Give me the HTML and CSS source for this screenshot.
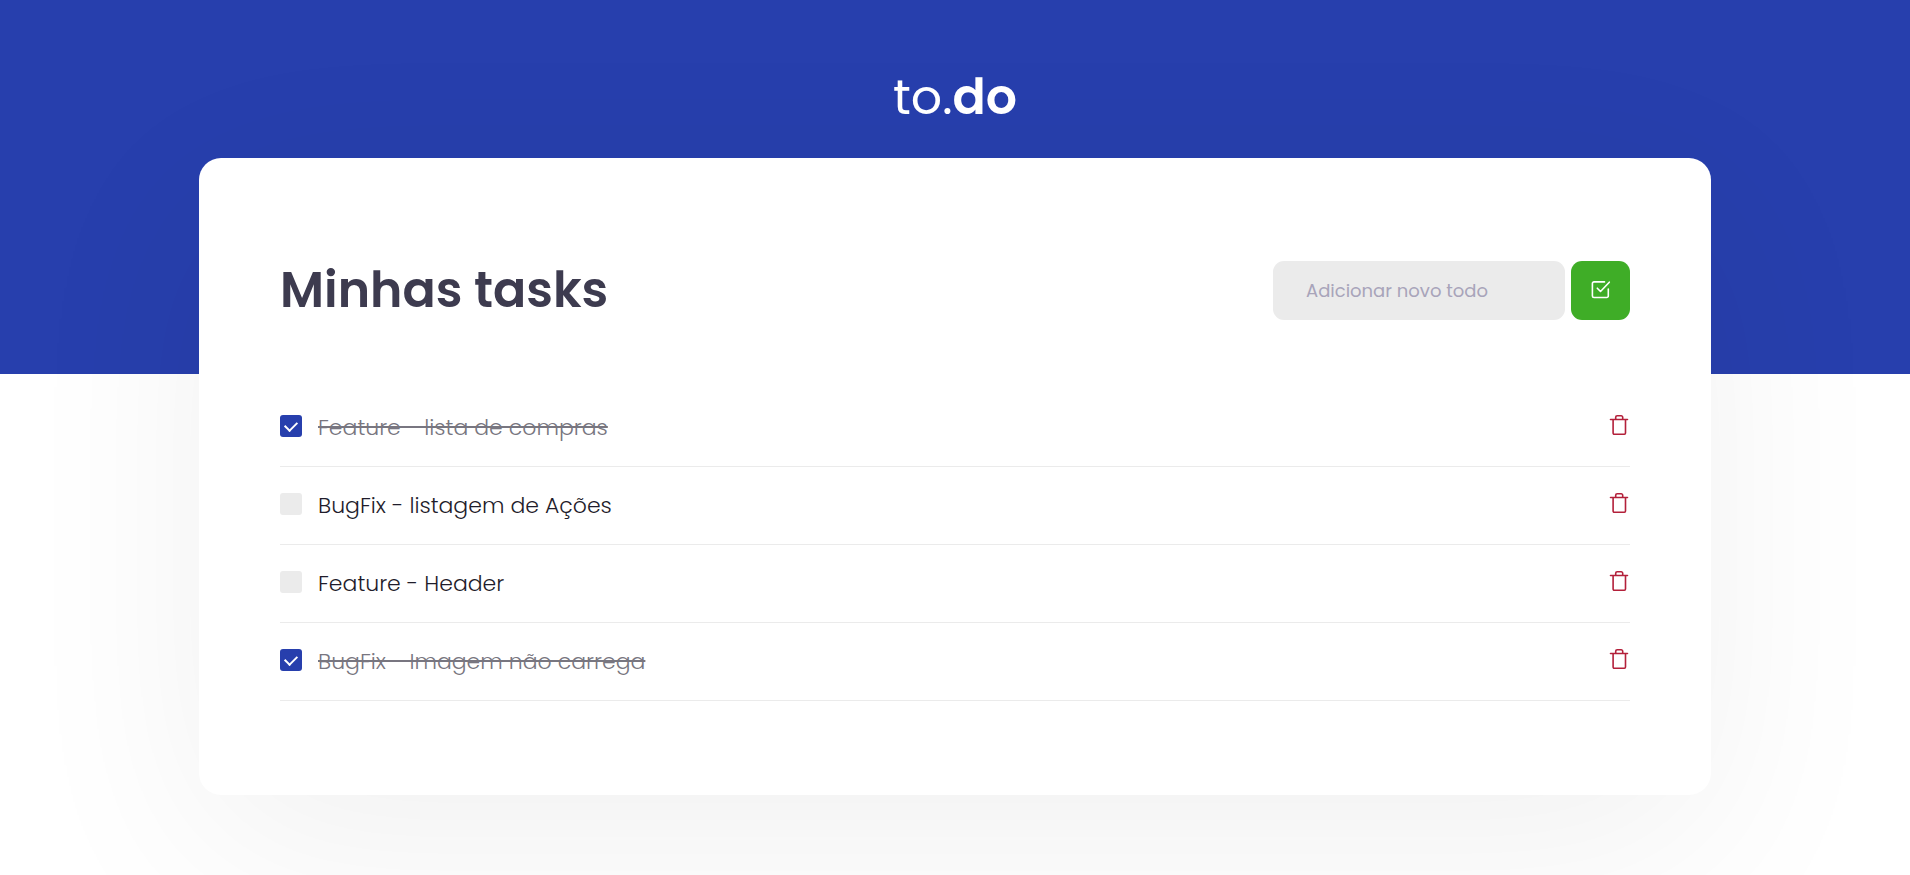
FILE: index.html
```
<!DOCTYPE html>
<html lang="pt-BR">
<head>
<meta charset="utf-8">
<meta name="viewport" content="width=device-width, initial-scale=1">
<title>to.do</title>
<link rel="stylesheet" href="styles.css">
</head>
<body>
<svg class="sprite" aria-hidden="true">
  <symbol id="trash" viewBox="0 0 22 22">
    <path d="M2.500 5.500h17M17.500 5.500v13.600a1.100 1.100 0 0 1-1.100 1.100H6.200A1.100 1.100 0 0 1 5.100 19.100V5.500M7.700 5.300V3.300a1.500 1.500 0 0 1 1.500-1.500h4a1.500 1.500 0 0 1 1.500 1.500v2"/>
  </symbol>
  <symbol id="check-square" viewBox="0 0 22 22">
    <path d="M7.300 9.200l3.200 3.300L19.300 3.200M18.300 10v6.900a1.600 1.600 0 0 1-1.600 1.600H4A1.600 1.600 0 0 1 2.400 16.900V4.500A1.600 1.600 0 0 1 4 2.900h10.500"/>
  </symbol>
</svg>
<header class="header">
  <div class="logo">to.<strong>do</strong></div>
</header>
<main class="card">
  <div class="card-head">
    <h1>Minhas tasks</h1>
    <form class="new-task">
      <input class="new-input" type="text" placeholder="Adicionar novo todo" aria-label="Adicionar novo todo">
      <button class="add" type="button" aria-label="Adicionar"><svg class="icon"><use href="#check-square"/></svg></button>
    </form>
  </div>
  <ul class="tasks">
    <li class="task">
      <label class="task-label"><input class="check" type="checkbox" checked><span class="text">Feature - lista de compras</span></label>
      <button class="remove" type="button" aria-label="Remover"><svg class="icon"><use href="#trash"/></svg></button>
    </li>
    <li class="task">
      <label class="task-label"><input class="check" type="checkbox"><span class="text">BugFix - listagem de Ações</span></label>
      <button class="remove" type="button" aria-label="Remover"><svg class="icon"><use href="#trash"/></svg></button>
    </li>
    <li class="task">
      <label class="task-label"><input class="check" type="checkbox"><span class="text">Feature - Header</span></label>
      <button class="remove" type="button" aria-label="Remover"><svg class="icon"><use href="#trash"/></svg></button>
    </li>
    <li class="task">
      <label class="task-label"><input class="check" type="checkbox" checked><span class="text">BugFix - Imagem não carrega</span></label>
      <button class="remove" type="button" aria-label="Remover"><svg class="icon"><use href="#trash"/></svg></button>
    </li>
  </ul>
</main>
</body>
</html>
```
FILE: styles.css
```
* { box-sizing: border-box; margin: 0; padding: 0; }
body {
  min-height: 100vh;
  background: #fff;
  color: #1f1d2b;
  font-family: Poppins, Inter, "Open Sans", sans-serif;
}
.sprite { display: none; }
.header {
  height: 374px;
  padding-top: 65px;
  background: #273fad;
  text-align: center;
}
.logo { color: #fff; font-size: 49px; line-height: 64px; font-weight: 400; }
.logo strong { font-weight: 600; }
.card {
  width: calc(100% - 64px);
  max-width: 1512px;
  margin: -216px auto 0;
  padding: 101px 81px 94px;
  border-radius: 22px;
  background: #fff;
  box-shadow: 0 50px 200px rgba(0, 0, 0, 0.06);
}
.card-head { display: flex; justify-content: space-between; align-items: center; gap: 24px; }
h1 { color: #3d3b4f; font-size: 49px; line-height: 62px; font-weight: 600; }
.new-task { display: flex; gap: 6px; }
.new-input {
  width: 292px;
  height: 59px;
  padding: 0 33px;
  border: 0;
  border-radius: 11px;
  background: #ebebeb;
  color: #3d3b4f;
  font: 400 18px Poppins, Inter, sans-serif;
}
.new-input::placeholder { color: #a8a4ba; opacity: 1; }
.add {
  display: grid;
  place-items: center;
  width: 59px;
  height: 59px;
  border: 0;
  border-radius: 11px;
  background: #3fad27;
  color: #fff;
}
.icon {
  display: block;
  width: 22px;
  height: 22px;
  fill: none;
  stroke: currentColor;
  stroke-width: 1.6;
  stroke-linecap: round;
  stroke-linejoin: round;
}
.tasks { margin-top: 68px; list-style: none; }
.task {
  display: flex;
  justify-content: space-between;
  align-items: center;
  height: 78px;
  border-bottom: 1px solid #ebebeb;
}
.task-label { display: flex; align-items: center; gap: 16px; font-size: 22px; line-height: 32px; font-weight: 300; }
.check {
  appearance: none;
  display: grid;
  place-items: center;
  width: 22px;
  height: 22px;
  margin-bottom: 3px;
  border-radius: 3px;
  background: #ebebeb;
}
.check:checked { background: #273fad; }
.check:checked::before {
  content: "";
  width: 10px;
  height: 6px;
  margin-top: -3px;
  border: solid #fff;
  border-width: 0 0 2px 2px;
  transform: rotate(-45deg);
}
.check:checked + .text { color: #787680; text-decoration: line-through; }
.remove { padding-bottom: 5px; border: 0; background: none; color: #b3203a; }
```
